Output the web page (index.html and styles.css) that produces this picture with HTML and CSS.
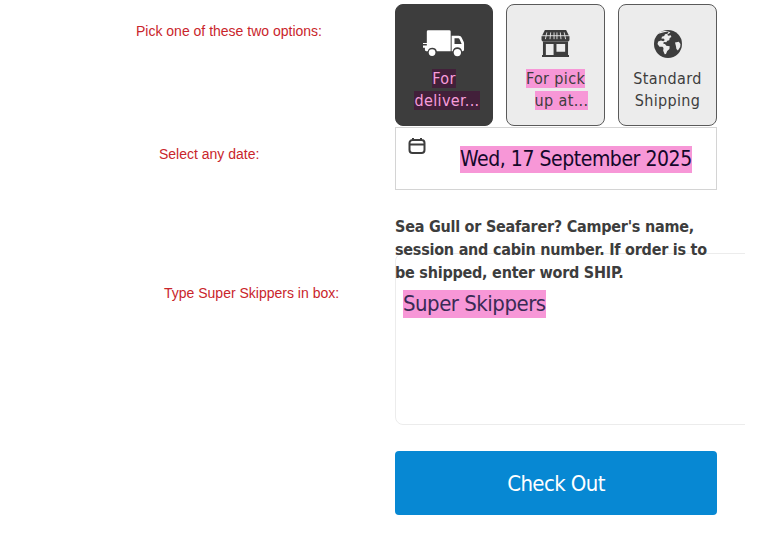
FILE: index.html
```html
<!DOCTYPE html>
<html lang="en">
  <head>
    <meta charset="UTF-8" />
    <meta name="viewport" content="width=device-width, initial-scale=1" />
    <title>Checkout</title>
    <link rel="stylesheet" href="styles.css">
  </head>
  <body>
    <!-- Shipping options -->
    <div class="row row-options">
      <p class="note note-options">Pick one of these two options:</p>
      <div class="tiles">
        <div class="tile tile-active">
          <svg class="tile-icon" viewBox="0 0 44 28" width="42" height="27">
            <path fill="currentColor" d="M4 1.500a1.500 1.500 0 0 1 1.500-1.500h22a1.500 1.500 0 0 1 1.500 1.500v20.500h-14.500a5 5 0 0 0-9.500 0h-1.500a1.500 1.500 0 0 1-1.500-1.500v-2h-2v-2.500h4v-1.500h-4v-1h4z"/>
            <path fill="currentColor" fill-rule="evenodd" d="M30 6h7.500c1.500 0 2.500.8 3.200 2.200l2 4.300c.2.500.3 1 .3 1.500v6.500c0 .8-.6 1.500-1.500 1.500h-.6a5 5 0 0 0-9.800 0h-1.100zm3 2.500v6h7.500l-2.200-5c-.2-.6-.7-1-1.400-1z"/>
            <circle fill="currentColor" cx="9.500" cy="23.500" r="3.500"/>
            <circle fill="currentColor" cx="36" cy="23.500" r="3.800"/>
          </svg>
          <span class="tile-line"><mark class="hl-dark">For</mark></span>
          <span class="tile-line tile-line-shift"><mark class="hl-dark">deliver...</mark></span>
        </div>
        <div class="tile">
          <svg class="tile-icon" viewBox="0 0 30 28" width="29" height="27">
            <path fill="currentColor" d="M4 0h22l3.500 7v3a2 2 0 0 1-1.600 1.900h-25.800a2 2 0 0 1-1.600-1.900v-3z"/>
            <path stroke="#ececec" stroke-width=".9" d="M6 2.500l-1.500 7M10 2.500l-.7 7M13.500 2.500v7M16.500 2.500v7M20 2.500l.7 7M24 2.500l1.500 7"/>
            <path fill="#ececec" d="M1 5.500h28v.9h-28z"/>
            <path fill="currentColor" fill-rule="evenodd" d="M2 12h26v14h1v2h-28v-2h1zm3 2.500v11.500h8v-11.500zm11 0v8h9v-8z"/>
          </svg>
          <span class="tile-line"><mark class="hl">For pick</mark></span>
          <span class="tile-line tile-line-shift-more"><mark class="hl">up at...</mark></span>
        </div>
        <div class="tile">
          <svg class="tile-icon tile-icon-globe" viewBox="0 0 28 28" width="28" height="28">
            <circle fill="currentColor" cx="14" cy="14" r="14"/>
            <path fill="#ececec" d="M9 2.500c2-.8 4-.9 5.500-.6l-1 1.800-2.500.5-.8 1.800-2.300.8-.4 2 2-.3 1.300 1.500-1.500 1.200-2.300-.7-2.800.9-.7 2.600 2 2.700 3 .1 1 1.300-.3 2.600 1.500 3.500 1.300-.2 1.200-3.100 2.200-2 .3-2.600-3.400-.6-1.300-1.700-1.700-.3.5-1.700 2.500.2 1-1.400 1.900-.5.5-2.200 1.700-1-.7-1.800-2.300.4-1.200-1 3.200-2.200c-3.500-1.800-7-1.900-9-.9-1.600.4-3 1.300-4 2.500z"/>
            <path fill="#ececec" d="M21 12.500l3.800-.8 1.700 2.200-.3 3.200-2.300 3.500-1.500-1.500-.5-3.100z"/>
          </svg>
          <span class="tile-line">Standard</span>
          <span class="tile-line">Shipping</span>
        </div>
      </div>
    </div>

    <!-- Date -->
    <div class="row">
      <p class="note note-date">Select any date:</p>
      <div class="date-box">
        <svg class="date-icon" viewBox="0 0 18 18" width="18" height="18">
          <path fill="none" stroke="currentColor" stroke-width="2" d="M5 1v2.500M13 1v2.500M4.500 3h9a3 3 0 0 1 3 3v7a3 3 0 0 1-3 3h-9a3 3 0 0 1-3-3v-7a3 3 0 0 1 3-3zM1.500 7.500h15"/>
        </svg>
        <mark class="hl date-text">Wed, 17 September 2025</mark>
      </div>
    </div>

    <!-- Camper details -->
    <div class="row row-details">
      <p class="note note-text">Type Super Skippers in box:</p>
      <div class="details">
        <p class="details-label">Sea Gull or Seafarer? Camper's name, session and cabin number. If order is to be shipped, enter word SHIP.</p>
        <div class="textbox-clip">
          <div class="textbox"><mark class="hl textbox-text">Super Skippers</mark></div>
        </div>
      </div>
    </div>

    <!-- Submit -->
    <div class="row row-submit">
      <button class="checkout" type="button">Check Out</button>
    </div>
  </body>
</html>
```

FILE: styles.css
```css
/* Basic Reset */
* {
  margin: 0;
  padding: 0;
  box-sizing: border-box;
}

body {
  background-color: #fff;
  color: #3d3d3d;
  font-family: "DejaVu Sans", "Noto Sans", sans-serif;
  font-stretch: condensed;
  padding-top: 4px;
  overflow: hidden;
}

/* Every row is a note column and a form column */
.row {
  display: grid;
  grid-template-columns: 395px 350px;
}

.row-options {
  margin-bottom: 1px;
}

.row-details {
  margin-top: 25px;
}

.row-submit {
  margin-top: 26px;
}

/* Red notes on the left */
.note {
  font-family: "Liberation Sans", Arial, sans-serif;
  font-size: 14px;
  font-stretch: normal;
  line-height: 16px;
  color: #c9252b;
}

.note-options {
  padding: 19px 0 0 136px;
}

.note-date {
  padding: 19px 0 0 159px;
}

.note-text {
  padding: 70px 0 0 164px;
}

/* Highlights */
.hl {
  background-color: #f797d7;
  color: inherit;
}

.hl-dark {
  background-color: #42203a;
  color: #f79ddb;
}

/* Shipping tiles */
.tiles {
  display: grid;
  grid-template-columns: 98px 99px 99px;
  gap: 13px;
  width: 322px;
}

.tile {
  height: 122px;
  padding-top: 25px;
  border: 1.5px solid #5a5a5a;
  border-radius: 8px;
  background-color: #ececec;
  color: #3d3d3d;
  font-size: 16px;
  letter-spacing: 0.35px;
  line-height: 22px;
  text-align: center;
}

.tile-active {
  border-color: #3d3d3d;
  background-color: #3d3d3d;
  color: #fff;
}

.tile-icon {
  display: block;
  margin: 0 auto 11px;
}

.tile-icon-globe {
  margin-bottom: 10px;
}

.tile-line {
  display: block;
}

.tile-line-shift {
  padding-left: 6px;
}

.tile-line-shift-more {
  padding-left: 12px;
}

/* Date box */
.date-box {
  display: flex;
  width: 322px;
  height: 63px;
  padding: 9px 0 0 12px;
  border: 1px solid #d4d4d4;
  background-color: #fff;
}

.date-icon {
  flex-shrink: 0;
  color: #3d3d3d;
}

.date-text {
  align-self: flex-start;
  margin: 9px 0 0 34px;
  color: #14082a;
  font-size: 21px;
  letter-spacing: -0.45px;
  line-height: 27px;
  white-space: nowrap;
}

/* Textarea with the label running over its top edge */
.details-label {
  position: relative;
  z-index: 1;
  width: 322px;
  font-size: 16px;
  font-weight: 700;
  letter-spacing: -0.24px;
  line-height: 23px;
}

.textbox-clip {
  margin-top: -31px;
  overflow: hidden;
}

.textbox {
  width: 400px;
  height: 172px;
  padding: 36px 7px 0;
  border: 1px solid #ececec;
  border-radius: 8px;
  background-color: #fff;
}

.textbox-text {
  display: inline-block;
  color: #3a2a55;
  font-size: 22px;
  letter-spacing: -0.5px;
  line-height: 28px;
}

/* Check Out */
.checkout {
  grid-column: 2;
  width: 322px;
  height: 64px;
  border: none;
  border-radius: 4px;
  background-color: #0788d3;
  color: #fff;
  font-family: inherit;
  font-stretch: inherit;
  font-size: 22px;
  letter-spacing: -0.6px;
}
```
